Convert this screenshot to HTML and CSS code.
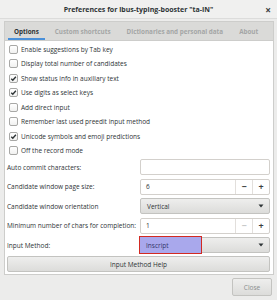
FILE: index.html
```html
<!DOCTYPE html>
<html lang="en">
<head>
    <meta charset="UTF-8">
    <title>Preferences for ibus-typing-booster</title>
    <link rel="stylesheet" href="styles.css">
</head>
<body>
    <div class="titlebar">
        <span class="title">Preferences for ibus-typing-booster "ta-IN"</span>
        <span class="close-x">&#215;</span>
    </div>

    <div class="notebook">
        <div class="tabs">
            <div class="tab active">Options</div>
            <div class="tab">Custom shortcuts</div>
            <div class="tab">Dictionaries and personal data</div>
            <div class="tab">About</div>
        </div>

        <div class="page">
            <div class="checks">
                <div class="check"><span class="box"></span>Enable suggestions by Tab key</div>
                <div class="check"><span class="box"></span>Display total number of candidates</div>
                <div class="check"><span class="box on"><svg viewBox="0 0 10 10"><path d="M1.8 5.2 L4 7.4 L8.4 2.4" /></svg></span>Show status info in auxiliary text</div>
                <div class="check"><span class="box on"><svg viewBox="0 0 10 10"><path d="M1.8 5.2 L4 7.4 L8.4 2.4" /></svg></span>Use digits as select keys</div>
                <div class="check"><span class="box"></span>Add direct input</div>
                <div class="check"><span class="box"></span>Remember last used preedit input method</div>
                <div class="check"><span class="box on"><svg viewBox="0 0 10 10"><path d="M1.8 5.2 L4 7.4 L8.4 2.4" /></svg></span>Unicode symbols and emoji predictions</div>
                <div class="check"><span class="box"></span>Off the record mode</div>
            </div>

            <div class="form">
                <div class="label">Auto commit characters:</div>
                <div class="entry"></div>

                <div class="label">Candidate window page size:</div>
                <div class="spin">
                    <span class="spin-value">6</span>
                    <span class="spin-btn">&#8722;</span>
                    <span class="spin-btn">+</span>
                </div>

                <div class="label">Candidate window orientation</div>
                <div class="combo">
                    <span>Vertical</span>
                    <svg class="arrow" viewBox="0 0 6 4"><path d="M0.5 0.5 H5.5 L3 3.5 Z" /></svg>
                </div>

                <div class="label">Minimum number of chars for completion:</div>
                <div class="spin">
                    <span class="spin-value">1</span>
                    <span class="spin-btn off">&#8722;</span>
                    <span class="spin-btn">+</span>
                </div>

                <div class="label">Input Method:</div>
                <div class="combo">
                    <span class="picked">Inscript</span>
                    <svg class="arrow" viewBox="0 0 6 4"><path d="M0.5 0.5 H5.5 L3 3.5 Z" /></svg>
                </div>
            </div>

            <div class="btn help">Input Method Help</div>
        </div>
    </div>

    <div class="actions">
        <div class="btn close">Close</div>
    </div>
</body>
</html>
```

FILE: styles.css
```css
body {
    margin: 0;
    background-color: #ececeb;
    font-family: "Open Sans", "DejaVu Sans", sans-serif;
    font-size: 6.5px;
    color: #2e3436;
    width: 277px;
    height: 300px;
    overflow: hidden;
    white-space: nowrap;
}

.titlebar {
    height: 18px;
    background-color: #f0f0ef;
    border-bottom: 1px solid #dcdcdb;
    display: flex;
    align-items: center;
    justify-content: center;
    position: relative;
}
.title {
    font-weight: bold;
    font-size: 7px;
}
.close-x {
    position: absolute; /* sits over the title bar */
    right: 6px;
    top: 3px;
    font-size: 10px;
    font-weight: bold;
    color: #3b3f40;
}

.notebook {
    margin: 2px 3px 0 4px;
    border: 1px solid #cdcdcb;
    background-color: #ffffff;
}
.tabs {
    display: flex;
    height: 18px;
    padding-left: 3px;
    background-color: #dadad8;
    border-bottom: 1px solid #cdcdcb;
}
.tab {
    display: flex;
    align-items: center;
    padding: 2px 6px 0;
    margin-right: 4px;
    font-size: 6.3px;
    font-weight: bold;
    color: #a4a6a6;
    box-sizing: border-box;
    border-bottom: 2px solid transparent;
}
.tab.active {
    color: #2e3436;
    border-bottom-color: #4a90d9;
}

.page {
    padding: 1px 3px 2px 2px;
}

.check {
    display: flex;
    align-items: center;
    height: 14.5px;
    padding-left: 2px;
}
.box {
    width: 7px;
    height: 7px;
    border: 1px solid #a8a8a6;
    border-radius: 2px;
    background: linear-gradient(#ffffff, #f1f1f0);
    margin-right: 3px;
    display: flex;
}
.box svg {
    width: 7px;
    height: 7px;
}
.box path {
    fill: none;
    stroke: #2e3436;
    stroke-width: 2;
}

.form {
    display: grid;
    grid-template-columns: 133px 1fr;
    grid-auto-rows: 16px;
    row-gap: 3.6px;
    margin-top: 1px;
    align-items: center;
}
.label {
    align-self: center;
}
.entry, .spin {
    height: 16px;
    box-sizing: border-box;
    border: 1px solid #d3d0cc;
    border-radius: 2px;
    background: #ffffff;
}
.spin {
    display: flex;
    align-items: stretch;
}
.spin-value {
    flex: 1;
    display: flex;
    align-items: center;
    padding-left: 5px;
}
.spin-btn {
    width: 16px;
    display: flex;
    align-items: center;
    justify-content: center;
    border-left: 1px solid #e2dfdc;
    font-size: 9px;
    font-weight: bold;
    color: #3b3f40;
}
.spin-btn.off {
    color: #c5c7c7;
}

.btn, .combo {
    box-sizing: border-box;
    height: 16px;
    border: 1px solid #c3c3c0;
    border-radius: 2px;
    background: linear-gradient(#eeeeed, #dcdcda);
    display: flex;
    align-items: center;
}
.combo {
    position: relative;
    padding: 0 5px 0 6px;
}
.arrow {
    width: 6px;
    height: 4px;
    margin-left: auto;
}
.arrow path {
    fill: #2e3436;
}
.picked {
    position: absolute; /* highlight drawn over the combo */
    left: -2px;
    top: -2px;
    bottom: -2px;
    width: 55px;
    padding-left: 6px;
    display: flex;
    align-items: center;
    background-color: #a9a8ec;
    border: 1px solid #d22a22;
    color: #34346a;
}

.help {
    justify-content: center;
    margin-top: 3px;
}

.actions {
    display: flex;
    justify-content: flex-end;
    padding: 3px 5px 0 0;
}
.close {
    width: 40px;
    height: 18px;
    justify-content: center;
    color: #8b8e8f;
}
```
